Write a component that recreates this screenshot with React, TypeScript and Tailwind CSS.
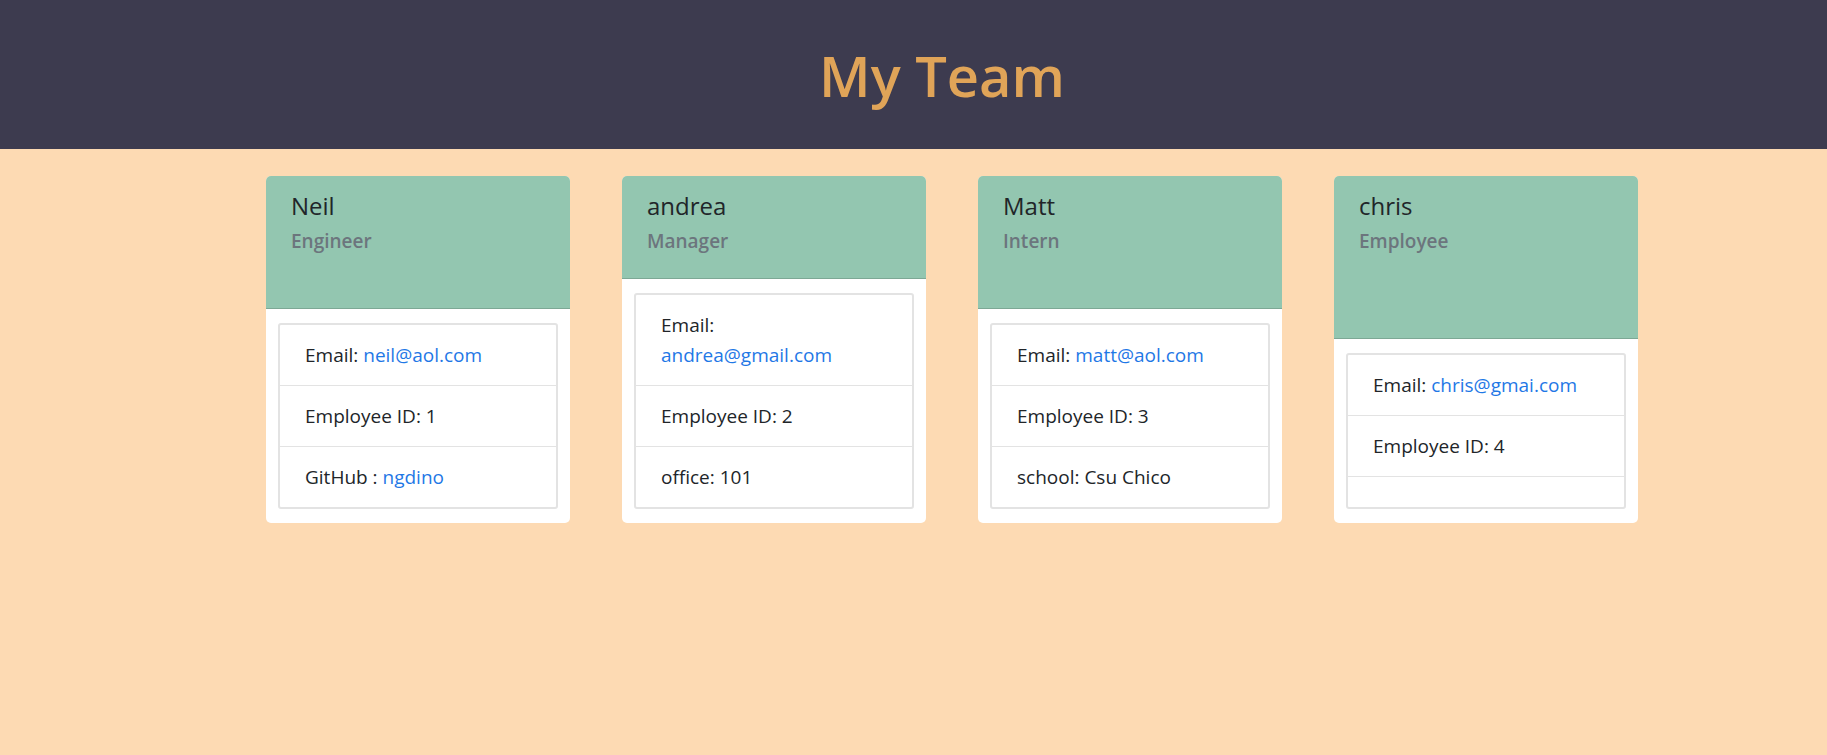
import React from 'react';

interface Member {
  name: string;
  role: string;
  email: string;
  id: number;
  extraLabel?: string;
  extraValue?: string;
  extraLink?: boolean;
}

const team: Member[] = [
  { name: 'Neil', role: 'Engineer', email: 'neil@aol.com', id: 1, extraLabel: 'GitHub : ', extraValue: 'ngdino', extraLink: true },
  { name: 'andrea', role: 'Manager', email: 'andrea@gmail.com', id: 2, extraLabel: 'office: ', extraValue: '101' },
  { name: 'Matt', role: 'Intern', email: 'matt@aol.com', id: 3, extraLabel: 'school: ', extraValue: 'Csu Chico' },
  { name: 'chris', role: 'Employee', email: 'chris@gmai.com', id: 4 },
];

function MemberCard({ member }: { member: Member }) {
  return (
    <div className="w-[304px] flex flex-col bg-white rounded-[5px] overflow-hidden">
      {/* encabezado */}
      <div className="flex-1 bg-[#93c6b0] border-b border-black/15 px-[25px] pt-[15px] pb-[25px]">
        <h2 className="text-[24px] leading-[30px] font-medium text-[#212529] mb-[8px]">{member.name}</h2>
        <h3 className="text-[19px] leading-[24px] font-semibold text-[#6c757d]">{member.role}</h3>
      </div>
      <div className="px-3 pt-[14px] pb-[14px]">
        <ul className="border-2 border-[#e3e3e3] divide-y divide-[#e3e3e3] rounded-[3px]">
          <li className="px-[25px] py-[15px] text-[19px] leading-[30px] text-[#212529]">
            Email: <a className="text-[#1f78e6]">{member.email}</a>
          </li>
          <li className="px-[25px] py-[15px] text-[19px] leading-[30px] text-[#212529]">
            Employee ID: {member.id}
          </li>
          <li className="px-[25px] py-[15px] text-[19px] leading-[30px] text-[#212529]">
            {member.extraLabel}
            {member.extraLink ? <a className="text-[#1f78e6]">{member.extraValue}</a> : member.extraValue}
          </li>
        </ul>
      </div>
    </div>
  );
}

export default function App() {
  return (
    <div className="min-h-[755px] bg-[#fddab3]" style={{ fontFamily: '"Open Sans", "Noto Sans", sans-serif' }}>
      <header className="h-[149px] bg-[#3d3b4f] flex items-center justify-center pl-[57px]">
        <h1 className="text-[56px] leading-[68px] font-semibold text-[#e0a458]">My Team</h1>
      </header>
      <main className="flex justify-center items-stretch gap-[52px] pt-[27px] pl-[77px]">
        {team.map((m) => (
          <MemberCard key={m.id} member={m} />
        ))}
      </main>
    </div>
  );
}
